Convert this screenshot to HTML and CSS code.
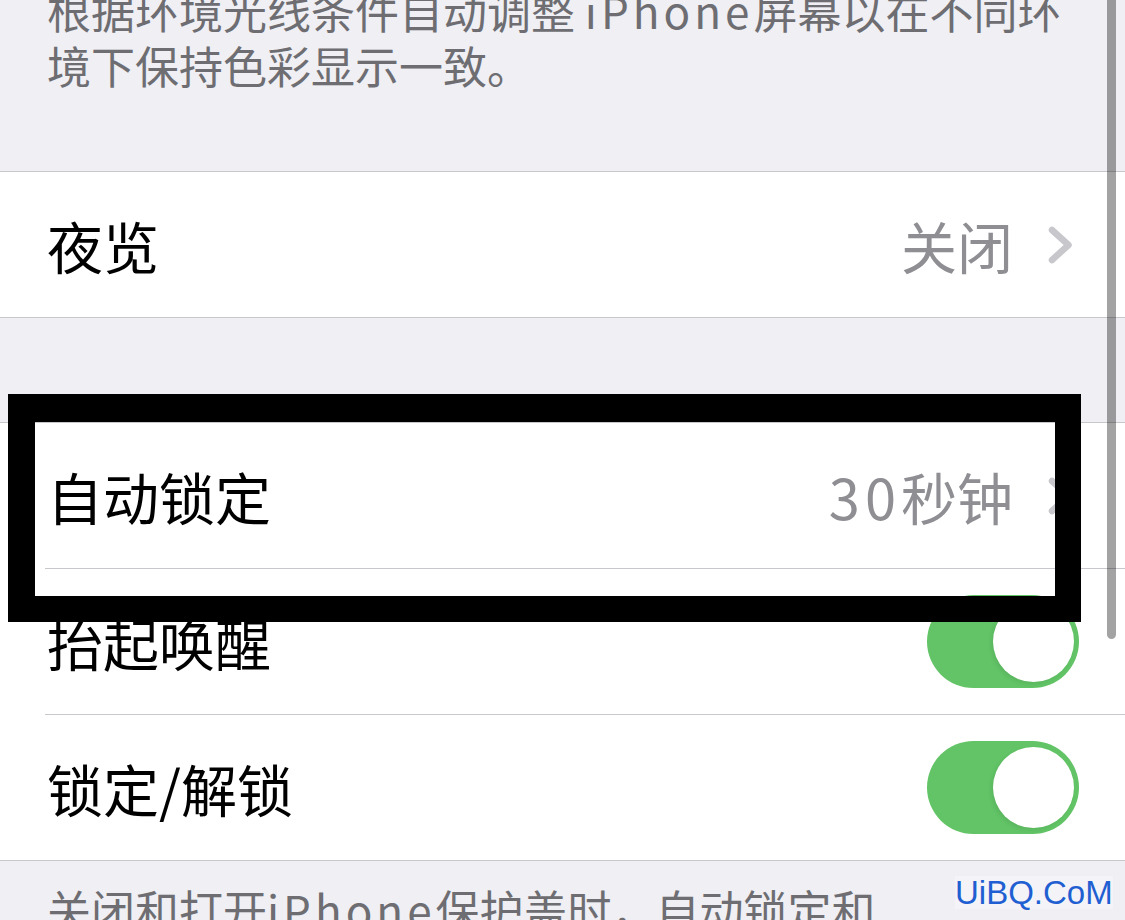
FILE: index.html
```html
<!DOCTYPE html>
<html lang="zh-CN">
<head>
<meta charset="utf-8">
<title>显示与亮度</title>
<link rel="stylesheet" href="styles.css">
</head>
<body>
<div class="screen">
  <p class="note note-top">根据环境光线条件自动调整 <span class="en">iPhone</span>屏幕以在不同环<br>境下保持色彩显示一致。</p>

  <section class="group group-first">
    <div class="cell">
      <div class="cell-body has-chevron">
        <span class="label">夜览</span>
        <span class="value">关闭</span>
        <svg class="chevron" width="25" height="38" viewBox="0 0 25 38"><path d="M4 4 L20.5 19 L4 34" fill="none" stroke="#c7c7cc" stroke-width="6.5" stroke-linecap="round" stroke-linejoin="round"/></svg>
      </div>
    </div>
  </section>

  <section class="group">
    <div class="cell">
      <div class="cell-body has-chevron">
        <span class="label">自动锁定</span>
        <span class="value"><span class="num">30</span>秒钟</span>
        <svg class="chevron" width="25" height="38" viewBox="0 0 25 38"><path d="M4 4 L20.5 19 L4 34" fill="none" stroke="#c7c7cc" stroke-width="6.5" stroke-linecap="round" stroke-linejoin="round"/></svg>
      </div>
    </div>
    <div class="cell">
      <div class="cell-body has-toggle">
        <span class="label">抬起唤醒</span>
        <span class="toggle on"><span class="knob"></span></span>
      </div>
    </div>
    <div class="cell">
      <div class="cell-body has-toggle">
        <span class="label">锁定/解锁</span>
        <span class="toggle on"><span class="knob"></span></span>
      </div>
    </div>
  </section>

  <p class="note note-bottom">关闭和打开<span class="en">iPhone</span>保护盖时，自动锁定和<br>解锁 <span class="en">iPhone</span>。</p>

  <div class="highlight-frame"></div>
  <div class="scroll-indicator"></div>
  <div class="watermark">UiBQ.CoM</div>
</div>
</body>
</html>
```

FILE: styles.css
```css
html, body {
  margin: 0;
  padding: 0;
  width: 1125px;
  height: 920px;
  overflow: hidden;
  background: #efeff4;
}

.screen {
  position: relative;
  width: 1125px;
  height: 920px;
  overflow: hidden;
  font-family: "Noto Sans CJK SC", "Noto Sans", sans-serif;
}

.note {
  margin: 0;
  padding: 0 45px 0 47px;
  font-size: 44px;
  line-height: 55px;
  color: #6d6d72;
}

.note .en {
  letter-spacing: 4px;
}

.note-top {
  margin-top: -17px;
  padding-bottom: 78px;
}

.note-bottom {
  padding-top: 21px;
}

.group {
  background: #fff;
  border-top: 1px solid #c8c7cc;
  border-bottom: 1px solid #c8c7cc;
  margin-top: 104px;
}

.group-first {
  margin-top: 0;
}

.cell {
  padding-left: 45px;
}

.cell-body {
  height: 145px;
  display: flex;
  align-items: center;
  border-bottom: 1px solid #c8c7cc;
  padding-left: 2px;
}

.cell:last-child .cell-body {
  border-bottom: none;
}

.has-chevron {
  padding-right: 52px;
}

.has-toggle {
  padding-right: 46px;
}

.label {
  flex: 1;
  font-size: 56px;
  color: #000;
  line-height: 1;
}

.value {
  font-size: 56px;
  color: #8e8e93;
  line-height: 1;
  margin-right: 35px;
}

.value .num {
  letter-spacing: 5px;
}

.chevron {
  display: block;
  flex: none;
}

.toggle {
  width: 152px;
  height: 93px;
  border-radius: 47px;
  background: #62c466;
  display: flex;
  justify-content: flex-end;
  align-items: center;
  padding: 0 5px;
  box-sizing: border-box;
  flex: none;
}

.knob {
  width: 81px;
  height: 81px;
  border-radius: 50%;
  background: #fff;
  box-shadow: -2px 2px 4px rgba(0, 0, 0, 0.08);
}

.highlight-frame {
  position: absolute;
  left: 8px;
  top: 394px;
  width: 1073px;
  height: 228px;
  box-sizing: border-box;
  border-style: solid;
  border-color: #000;
  border-width: 28px 26px 26px 27px;
}

.scroll-indicator {
  position: absolute;
  left: 1107px;
  top: -10px;
  width: 9px;
  height: 649px;
  border-radius: 5px;
  background: rgba(0, 0, 0, 0.36);
}

.watermark {
  position: absolute;
  left: 955px;
  top: 876px;
  font-family: "Liberation Sans", Arial, sans-serif;
  font-size: 33px;
  line-height: 33px;
  color: #1f5fd2;
  background: rgba(255, 255, 255, 0.35);
}
```
